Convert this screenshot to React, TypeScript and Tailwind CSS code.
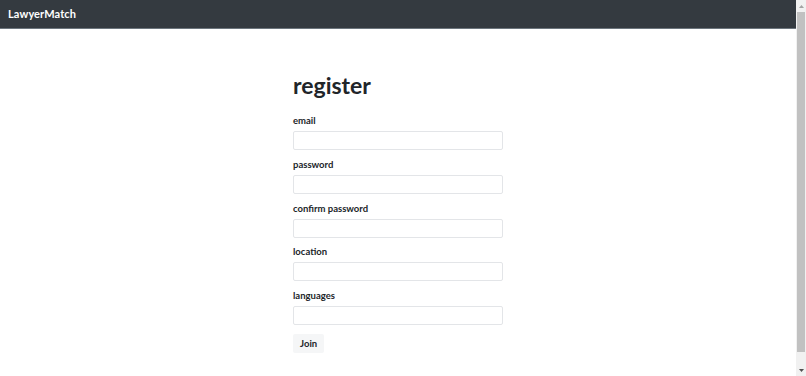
import React from "react";

const fields = ["email", "password", "confirm password", "location", "languages"];

function Scrollbar() {
  return (
    <div className="w-[10px] h-[376px] bg-[#f1f1f1] flex flex-col items-center shrink-0">
      <div className="h-[12px] flex items-center justify-center">
        <svg width="5" height="3" viewBox="0 0 5 3"><polygon points="2.5,0 5,3 0,3" fill="#a3a3a3" /></svg>
      </div>
      <div className="w-[8px] h-[340px] bg-[#c1c1c1]" />
      <div className="flex-1" />
      <div className="h-[12px] flex items-center justify-center">
        <svg width="5" height="3" viewBox="0 0 5 3"><polygon points="0,0 5,0 2.5,3" fill="#505050" /></svg>
      </div>
    </div>
  );
}

export default function App() {
  return (
    <div className="h-[376px] overflow-hidden flex bg-white text-[#212529]" style={{ fontFamily: "Lato, 'Noto Sans', sans-serif" }}>
      <div className="flex-1">
        <nav className="h-[29px] bg-[#343a40] border-b border-[#6c757d] flex items-center px-2">
          <span className="text-white font-bold text-[11px] tracking-[0.1px]">LawyerMatch</span>
        </nav>
        <div className="flex justify-center pt-[42px]">
          <div className="w-[210px]">
            <h1 className="text-[23px] font-bold leading-[28px] mb-[16px]">register</h1>
            {fields.map((f) => (
              <div key={f} className="mb-[8.75px]">
                <label className="block text-[9.5px] font-bold leading-[12px] mb-[4px]">{f}</label>
                <input className="block w-[210px] h-[19px] border border-[#e3e5e8] rounded-[2px] outline-none" />
              </div>
            ))}
            <button className="block h-[19px] px-[7px] bg-[#f5f6f7] text-[9.5px] font-bold leading-[19px] rounded-[2px]">Join</button>
          </div>
        </div>
      </div>
      <Scrollbar />
    </div>
  );
}
